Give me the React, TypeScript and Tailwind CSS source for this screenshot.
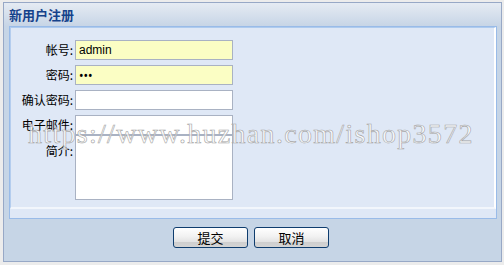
import React from 'react';

const cjk = { fontFamily: '"Noto Sans CJK SC", "DejaVu Sans", sans-serif' };

function Row({ label, children, top }: { label: string; children: React.ReactNode; top?: boolean }) {
  return (
    <div className={`flex ${top ? 'items-start' : 'items-center'}`}>
      <div
        className={`w-[62px] text-right text-[12px] leading-[14px] text-black ${top ? 'pt-[9px]' : ''}`}
        style={cjk}
      >
        {label}:
      </div>
      <div className="ml-[2px]">{children}</div>
    </div>
  );
}

const inputBase =
  'block w-[158px] border border-[#a9b2c3] px-[3px] text-[12px] outline-none text-black';

export default function App() {
  return (
    <div className="w-[504px] h-[265px] bg-[#ececec] pt-[2px] pl-[3px] relative overflow-hidden">
      <div className="w-[499px] h-[260px] border border-[#97a8c6] bg-[#c6d5e6] flex flex-col">
        {/* header */}
        <div className="h-[23px] bg-[linear-gradient(#e5ebf3,#c7d5e6)] flex items-center pl-[5px]">
          <span className="text-[13px] font-bold text-[#15428b] leading-none" style={cjk}>
            新用户注册
          </span>
        </div>

        {/* fieldset */}
        <div className="ml-[5px] mr-[4px] h-[193px] border border-[#99bbe8] bg-[#dfe8f6] pb-[9px]">
          <div className="h-[182px] border-l border-t border-l-[#b4cdee] border-t-[#aecbee] border-r-2 border-b-2 border-r-white border-b-[#f2f6fc] pt-[12px] flex flex-col gap-[5px]">
            <Row label="帐号">
              <input
                readOnly
                defaultValue="admin"
                className={`${inputBase} h-[20px] bg-[#fbfec4]`}
                style={{ fontFamily: '"Liberation Sans", Arial, sans-serif' }}
              />
            </Row>
            <Row label="密码">
              <input
                readOnly
                type="password"
                defaultValue="abc"
                className={`${inputBase} h-[20px] bg-[#fbfec4] text-[10px]`}
              />
            </Row>
            <Row label="确认密码">
              <input readOnly className={`${inputBase} h-[20px] bg-white`} />
            </Row>
            <div className="flex flex-col">
              <Row label="电子邮件">
                <input readOnly className={`${inputBase} h-[20px] bg-white`} />
              </Row>
              <Row label="简介" top>
                <textarea readOnly className={`${inputBase} h-[65px] bg-white resize-none`} />
              </Row>
            </div>
          </div>
        </div>

        {/* buttons */}
        <div className="flex justify-center gap-[6px] pt-[8px] pr-[3px]">
          {['提交', '取消'].map((t) => (
            <button
              key={t}
              className="w-[75px] h-[21px] border border-[#0f3d6e] rounded-[3px] bg-[linear-gradient(#ffffff_0%,#f1f1f1_45%,#e2e2e2_75%,#cfcfcf_76%,#d4d4d4_100%)] text-[13px] leading-none text-black"
              style={cjk}
            >
              {t}
            </button>
          ))}
        </div>
      </div>

      {/* watermark */}
      <div
        className="absolute left-[28px] top-[120px] whitespace-nowrap text-[28px] leading-none tracking-[1.3px] text-white/75 pointer-events-none"
        style={{ fontFamily: '"Liberation Serif", serif', WebkitTextStroke: '0.6px #a4a4a4' }}
      >
        https://www.huzhan.com/ishop3572
      </div>
    </div>
  );
}
